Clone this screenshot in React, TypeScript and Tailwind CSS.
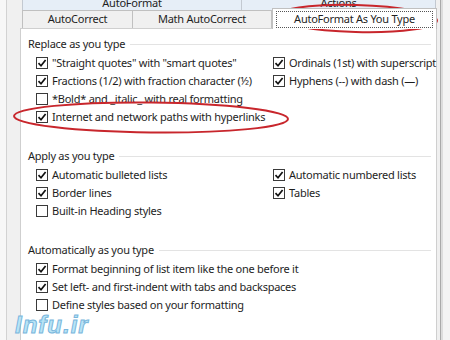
const font = { fontFamily: '"Noto Sans", "Open Sans", sans-serif' };

const Check = ({ on }: { on: boolean }) => (
  <span className="flex h-[12px] w-[12px] shrink-0 items-center justify-center border border-[#3a3a3a] bg-white">
    {on && (
      <svg width="10" height="10" viewBox="0 0 10 10">
        <path d="M1.5 5.2 L4 7.8 L8.6 2" fill="none" stroke="#111" strokeWidth="1.7" />
      </svg>
    )}
  </span>
);

const Option = ({ on, label }: { on: boolean; label: string }) => (
  <div className="flex h-[18px] items-center gap-[4px] whitespace-nowrap">
    <Check on={on} />
    <span>{label}</span>
  </div>
);

const Group = ({ title }: { title: string }) => (
  <div className="flex h-[18px] items-center gap-[5px] pr-[3px]">
    <span className="whitespace-nowrap">{title}</span>
    <span className="h-px flex-1 bg-[#e3e3e3]" />
  </div>
);

const App = () => {
  return (
    <div
      className="relative flex h-[340px] w-[450px] overflow-hidden bg-[#f0f0f0] text-[11px] tracking-[-0.25px] text-[#1e1e1e]"
      style={font}
    >
      {/* left edge of the dialog */}
      <div className="flex w-[20px] shrink-0">
        <div className="w-[6px] bg-[#f7f7f7]" />
        <div className="w-px bg-[#d2d2d2]" />
      </div>

      <div className="flex w-[417px] shrink-0 flex-col">
        {/* first tab row, cut off at the top */}
        <div className="-mt-[6px] ml-[2px] flex h-[16px]">
          <div className="flex w-[220px] items-center justify-center border border-b-0 border-[#c3c9d1] bg-[#e6eef7] pt-[2px]">
            AutoFormat
          </div>
          <div className="flex w-[194px] items-center justify-center border border-b-0 border-l-0 border-[#c3c9d1] bg-[#e6eef7] pt-[2px]">
            Actions
          </div>
        </div>

        {/* second tab row */}
        <div className="ml-[2px] flex h-[18px] items-end">
          <div className="flex h-[18px] w-[111px] items-center justify-center border border-b-0 border-[#c0c0c0] bg-[#f0f0f0]">
            AutoCorrect
          </div>
          <div className="flex h-[18px] w-[139px] items-center justify-center border border-b-0 border-l-0 border-[#c0c0c0] bg-[#f0f0f0]">
            Math AutoCorrect
          </div>
          <div className="relative z-10 -mb-px flex h-[21px] w-[165px] items-center justify-center border border-b-0 border-[#c0c0c0] bg-white px-[3px] pt-[1px]">
            <div className="flex h-[17px] w-full items-center justify-center border border-dotted border-[#555]">
              AutoFormat As You Type
            </div>
          </div>
        </div>

        {/* tab page */}
        <div className="flex flex-1 flex-col border border-b-0 border-[#cfcfcf] bg-white pl-[7px] pr-[2px] pt-[6px]">
          <Group title="Replace as you type" />
          <div className="ml-[8px] mt-px grid grid-cols-[237px_1fr]">
            <Option on label={'"Straight quotes" with "smart quotes"'} />
            <Option on label="Ordinals (1st) with superscript" />
            <Option on label="Fractions (1/2) with fraction character (½)" />
            <Option on label="Hyphens (--) with dash (—)" />
            <Option on={false} label="*Bold* and _italic_ with real formatting" />
            <div />
            <Option on label="Internet and network paths with hyperlinks" />
          </div>

          <div className="mt-[21px]">
            <Group title="Apply as you type" />
          </div>
          <div className="ml-[8px] mt-px grid grid-cols-[237px_1fr]">
            <Option on label="Automatic bulleted lists" />
            <Option on label="Automatic numbered lists" />
            <Option on label="Border lines" />
            <Option on label="Tables" />
            <Option on={false} label="Built-in Heading styles" />
          </div>

          <div className="mt-[21px]">
            <Group title="Automatically as you type" />
          </div>
          <div className="ml-[8px] mt-px flex flex-col">
            <Option on label="Format beginning of list item like the one before it" />
            <Option on label="Set left- and first-indent with tabs and backspaces" />
            <Option on={false} label="Define styles based on your formatting" />
          </div>
        </div>
      </div>

      {/* right edge of the dialog */}
      <div className="flex flex-1">
        <div className="w-[3px] bg-[#f0f0f0]" />
        <div className="w-px bg-[#a9a9a9]" />
        <div className="w-[2px] bg-[#dcdcdc]" />
        <div className="flex-1 bg-[#f3f3f3]" />
      </div>

      {/* red marker ellipses drawn over the screenshot */}
      <svg className="pointer-events-none absolute left-0 top-0" width="450" height="340">
        <ellipse cx="356" cy="18.5" rx="81" ry="13.5" fill="none" stroke="#c8262c" strokeWidth="2" transform="rotate(1.5 356 18.5)" />
        <ellipse cx="151" cy="117.5" rx="137" ry="15" fill="none" stroke="#c8262c" strokeWidth="2" transform="rotate(0.6 151 117.5)" />
      </svg>

      {/* watermark */}
      <div
        className="pointer-events-none absolute left-[15px] top-[307px] text-[24px] font-black italic tracking-[1px] text-[#b8e4f6]"
        style={{ fontFamily: '"Liberation Sans", Arial, sans-serif', WebkitTextStroke: "1px #79b6dc" }}
      >
        Infu.ir
      </div>
    </div>
  );
};

export default App;
